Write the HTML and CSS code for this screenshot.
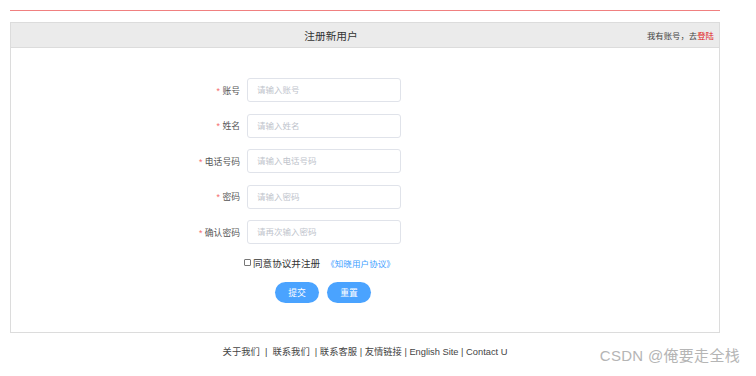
FILE: index.html
```html
<!DOCTYPE html>
<html>
    <head>
        <meta charset="utf-8">
        <title>注册新用户</title>
        <link rel="stylesheet" href="styles.css">
    </head>
    <body>
        <div class="page">
            <div class="top-line"></div>
            <div class="panel">
                <div class="panel-head">
                    <h2>注册新用户</h2>
                    <span class="login">我有账号，去<a href="#">登陆</a></span>
                </div>
                <form class="form">
                    <div class="row">
                        <label><span class="req">*</span> 账号</label>
                        <input type="text" placeholder="请输入账号">
                    </div>
                    <div class="row">
                        <label><span class="req">*</span> 姓名</label>
                        <input type="text" placeholder="请输入姓名">
                    </div>
                    <div class="row">
                        <label><span class="req">*</span> 电话号码</label>
                        <input type="text" placeholder="请输入电话号码">
                    </div>
                    <div class="row">
                        <label><span class="req">*</span> 密码</label>
                        <input type="password" placeholder="请输入密码">
                    </div>
                    <div class="row">
                        <label><span class="req">*</span> 确认密码</label>
                        <input type="password" placeholder="请再次输入密码">
                    </div>
                    <div class="agree">
                        <span class="box"></span>同意协议并注册 <a href="#">《知晓用户协议》</a>
                    </div>
                    <div class="actions">
                        <button type="button">提交</button>
                        <button type="reset">重置</button>
                    </div>
                </form>
            </div>
            <div class="footer">关于我们&nbsp; |&nbsp; 联系我们&nbsp; | 联系客服 | 友情链接 | English Site | Contact U</div>
        </div>
        <div class="mark">CSDN @俺要走全栈</div>
    </body>
</html>
```

FILE: styles.css
```css
body {
    margin: 0;
    font-family: "Liberation Sans", "Noto Sans CJK SC", sans-serif;
    color: #333;
    background: #fff;
}
.page {
    width: 710px;
    margin: 10px;
}
.top-line {
    border-top: 1px solid #f08080;
}
.panel {
    margin-top: 11px;
    border: 1px solid #dcdcdc;
}
.panel-head {
    display: flex;
    align-items: center;
    height: 24px;
    background-color: #ebebeb;
    border-bottom: 1px solid #dcdcdc;
}
.panel-head h2 {
    flex: 1;
    margin: 0 0 0 4px;
    font-size: 10.7px;
    font-weight: normal;
    text-align: center;
    color: #333;
}
.login {
    font-size: 8.4px;
    color: #444;
    padding-right: 5px;
}
.login a {
    color: #e02020;
    text-decoration: none;
}
.form {
    margin: 0 0 0 179px;
    padding: 30px 0 29px;
    display: flex;
    flex-direction: column;
    gap: 11.5px;
}
.row {
    display: flex;
    align-items: center;
    gap: 7px;
}
.row label {
    width: 50px;
    text-align: right;
    font-size: 8.8px;
    color: #555;
    white-space: nowrap;
}
.req {
    color: #f56c6c;
}
.row input {
    box-sizing: border-box;
    width: 154px;
    height: 24px;
    padding: 0 9px;
    border: 1px solid #e0e3ea;
    border-radius: 3px;
    font-family: inherit;
    font-size: 8.5px;
    outline: none;
}
.row input::placeholder {
    color: #c0c4cc;
}
.agree {
    display: flex;
    align-items: center;
    padding-left: 54px;
    font-size: 9.6px;
    color: #333;
}
.agree .box {
    box-sizing: border-box;
    width: 7px;
    height: 7px;
    border: 1px solid #777;
    border-radius: 1px;
    margin-right: 2px;
}
.agree a {
    margin-left: 6px;
    color: #409eff;
    font-size: 8.5px;
    letter-spacing: 0.1px;
    text-decoration: none;
}
.actions {
    display: flex;
    gap: 8px;
    padding-left: 85px;
    margin-top: 1px;
}
.actions button {
    width: 44px;
    height: 21px;
    border: none;
    border-radius: 11px;
    background-color: #4aa3ff;
    color: #fff;
    font-family: inherit;
    font-size: 8.8px;
    padding: 0;
}
.footer {
    margin-top: 11px;
    text-align: center;
    font-size: 9.3px;
    color: #444;
}
.mark {
    position: absolute;
    right: 16px;
    top: 344px;
    font-size: 15px;
    color: #b5b5b5;
    letter-spacing: 0.3px;
}
```
